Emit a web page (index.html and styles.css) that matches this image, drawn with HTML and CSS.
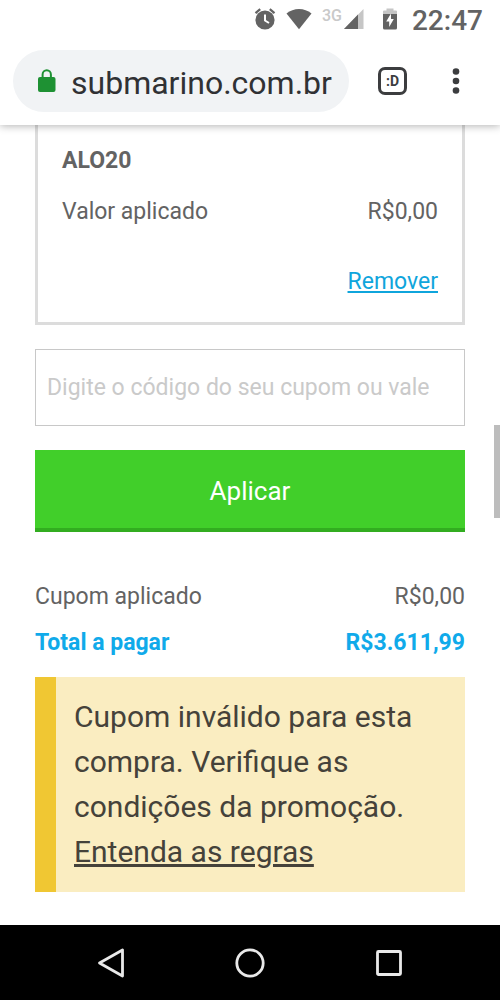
FILE: index.html
```html
<!DOCTYPE html>
<html lang="pt-BR">
<head>
<meta charset="utf-8">
<meta name="viewport" content="width=device-width, initial-scale=1">
<title>Submarino</title>
<link rel="stylesheet" href="styles.css">
</head>
<body class="screen">
<header class="chrome">
  <div class="status">
    <svg class="alarm" width="22" height="24" viewBox="0 0 22 24" aria-hidden="true">
      <circle cx="11" cy="13" r="9.6" fill="#636363"/>
      <path d="M1.5 6.2L6.2 2.2M20.5 6.2L15.8 2.2" stroke="#636363" stroke-width="2.2"/>
      <path d="M11 7.5V13.5L15 16" fill="none" stroke="#fff" stroke-width="2"/>
    </svg>
    <svg class="wifi" width="26" height="22" viewBox="0 0 26 22" aria-hidden="true">
      <path d="M13 21.2L.5 5.6Q6 1 13 1T25.500 5.600Z" fill="#636363"/>
    </svg>
    <span class="network">3G</span>
    <svg class="signal" width="20" height="20" viewBox="0 0 20 20" aria-hidden="true">
      <path d="M0 20L19.500 0V20Z" fill="#c6c6c6"/>
      <path d="M0 20L14 5.600V20Z" fill="#636363"/>
    </svg>
    <svg class="battery" width="14" height="22" viewBox="0 0 14 22" aria-hidden="true">
      <path d="M0 7V3.500Q0 2.500 1 2.500H3.500V.5H10.500V2.500H13Q14 2.500 14 3.500V7Z" fill="#c6c6c6"/>
      <path d="M0 6H14V20Q14 21.500 12.500 21.500H1.500Q0 21.500 0 20Z" fill="#636363"/>
      <path d="M8 5.500L3.200 13.500H6.200V19L10.800 11H8Z" fill="#fff"/>
    </svg>
    <time class="clock">22:47</time>
  </div>
  <div class="toolbar">
    <div class="address">
      <svg width="18" height="24" viewBox="0 0 18 24" role="img" aria-label="Seguro">
        <rect x="0" y="8" width="17.500" height="15" rx="2" fill="#1e9133"/>
        <path d="M4.600 9V5.500a4.150 4.150 0 0 1 8.300 0V9" fill="none" stroke="#1e9133" stroke-width="2"/>
      </svg>
      <span class="url">submarino.com.br</span>
    </div>
    <button class="tabs" type="button" aria-label="Abas">:D</button>
    <button class="more" type="button" aria-label="Mais opções">
      <svg width="8" height="26" viewBox="0 0 8 26" fill="#3c3d3f" aria-hidden="true">
        <circle cx="4" cy="3.500" r="3.300"/><circle cx="4" cy="13" r="3.300"/><circle cx="4" cy="22.500" r="3.300"/>
      </svg>
    </button>
  </div>
</header>
<main class="page">
  <section class="coupon">
    <h2 class="code">ALO20</h2>
    <div class="row"><span>Valor aplicado</span><span>R$0,00</span></div>
    <a class="remove" href="#">Remover</a>
  </section>
  <form class="form">
    <input class="field" type="text" aria-label="Código do cupom ou vale" placeholder="Digite o código do seu cupom ou vale">
    <button class="apply" type="button">Aplicar</button>
  </form>
  <div class="totals">
    <div class="row"><span>Cupom aplicado</span><span>R$0,00</span></div>
    <div class="row total"><span>Total a pagar</span><span>R$3.611,99</span></div>
  </div>
  <p class="notice">Cupom inválido para esta compra. Verifique as condições da promoção. <a href="#">Entenda as regras</a></p>
  <div class="thumb"></div>
</main>
<nav class="nav">
  <button type="button" aria-label="Voltar">
    <svg width="28" height="30" viewBox="0 0 28 30" aria-hidden="true"><path d="M25.500 2V28L2.500 15Z" fill="none" stroke="#e9e9e9" stroke-width="2.800" stroke-linejoin="round"/></svg>
  </button>
  <button type="button" aria-label="Início">
    <svg width="30" height="30" viewBox="0 0 30 30" aria-hidden="true"><circle cx="15" cy="15" r="13.200" fill="none" stroke="#e9e9e9" stroke-width="2.800"/></svg>
  </button>
  <button type="button" aria-label="Recentes">
    <svg width="28" height="30" viewBox="0 0 28 30" aria-hidden="true"><rect x="2.500" y="3.500" width="23" height="23" rx="1" fill="none" stroke="#e9e9e9" stroke-width="2.800"/></svg>
  </button>
</nav>
</body>
</html>
```
FILE: styles.css
```css
*,
*::before,
*::after {
  box-sizing: border-box;
}

.screen {
  display: flex;
  flex-direction: column;
  min-height: 100vh;
  margin: 0;
  background: #fff;
  color: #636363;
  font-family: Roboto, "Liberation Sans", sans-serif;
  font-size: 23px;
  line-height: 28px;
}

button {
  padding: 0;
  border: 0;
  background: none;
  color: inherit;
  font-family: inherit;
}

svg {
  display: block;
  flex: none;
}

.chrome {
  position: relative;
  z-index: 1;
  background: #fff;
  box-shadow: 0 1px 8px rgba(0, 0, 0, 0.3);
}

.status {
  display: flex;
  align-items: center;
  justify-content: flex-end;
  height: 40px;
  padding: 0 17px 2px 0;
}

.wifi {
  margin-left: 10px;
}

.network {
  margin-left: 10px;
  padding-bottom: 6px;
  color: #c9c9c9;
  font-size: 16px;
  font-weight: 500;
  line-height: 20px;
}

.signal {
  margin-left: 2px;
}

.battery {
  margin-left: 19px;
}

.clock {
  margin-left: 15px;
  padding-top: 4px;
  font-size: 28px;
  font-weight: 500;
}

.toolbar {
  display: flex;
  align-items: center;
  height: 85px;
  padding: 0 40px 3px 13px;
}

.address {
  display: flex;
  flex: 1;
  align-items: center;
  gap: 15px;
  height: 62px;
  padding-left: 25px;
  border-radius: 31px;
  background: #f1f3f5;
  color: #303134;
  font-size: 32px;
  line-height: 40px;
}

.url {
  padding-top: 4px;
}

.tabs {
  width: 29px;
  height: 28px;
  margin-left: 29px;
  border: 3px solid #3c3d3f;
  border-radius: 7px;
  color: #3c3d3f;
  font-size: 14px;
  font-weight: 700;
  line-height: 20px;
}

.more {
  margin-left: 45px;
}

.page {
  position: relative;
  flex: 1;
  padding: 0 35px 33px;
}

.coupon {
  display: flex;
  flex-direction: column;
  padding: 22px 24px 26px;
  border: 3px solid #dcdcdc;
  border-top: 0;
}

.code {
  margin: 0 0 23px;
  font-size: 23px;
  font-weight: 700;
}

.row {
  display: flex;
  justify-content: space-between;
}

.remove {
  align-self: flex-end;
  margin-top: 42px;
  color: #0fa5dc;
}

.form {
  display: flex;
  flex-direction: column;
  gap: 24px;
  margin: 24px 0 51px;
}

.field {
  width: 100%;
  height: 77px;
  padding: 0 11px;
  border: 1px solid #c8c8c8;
  border-radius: 0;
  background: #fff;
  color: #636363;
  font-family: inherit;
  font-size: 23px;
}

.field::placeholder {
  color: #cacaca;
}

.apply {
  height: 82px;
  padding-top: 4px;
  border-bottom: 4px solid #32ad20;
  background: #41cf2a;
  color: #fff;
  font-size: 26px;
}

.totals {
  display: flex;
  flex-direction: column;
  gap: 18px;
}

.total {
  color: #10aaea;
  font-weight: 700;
}

.notice {
  margin: 20px 0 0;
  padding: 17px 18px 18px;
  border-left: 21px solid #f0c733;
  background: #faedc1;
  color: #45423a;
  font-size: 30px;
  line-height: 45px;
}

.notice a {
  color: inherit;
}

.thumb {
  position: absolute;
  top: 300px;
  right: 0;
  width: 6px;
  height: 93px;
  background: #bdbdbd;
}

.nav {
  display: flex;
  align-items: center;
  justify-content: space-between;
  height: 75px;
  padding: 0 97px;
  background: #000;
}
```
